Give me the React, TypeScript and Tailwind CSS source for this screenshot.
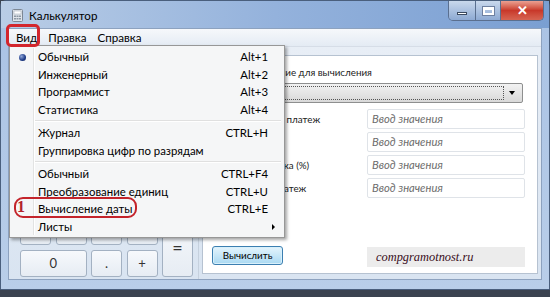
import React from "react";

const F = { fontFamily: 'Lato, "Noto Sans", sans-serif' };

function MenuItem({ label, shortcut, bullet, arrow }: { label: string; shortcut?: string; bullet?: boolean; arrow?: boolean }) {
  return (
    <div className="relative flex h-[17.5px] items-center pl-[28px] pr-[16px] text-[11.4px] text-black">
      {bullet && (
        <span className="absolute left-[9px] top-[6px] h-[7px] w-[7px] rounded-full bg-[radial-gradient(circle_at_35%_35%,#8fa6d8,#1d3a86_60%,#0e1f55)]" />
      )}
      <span className="flex-1 whitespace-nowrap">{label}</span>
      {shortcut && <span className="whitespace-nowrap">{shortcut}</span>}
      {arrow && (
        <span className="absolute right-[9px] top-[6px] h-0 w-0 border-y-[3px] border-l-[3px] border-y-transparent border-l-black" />
      )}
    </div>
  );
}

function Sep() {
  return (
    <div className="flex h-[6px] items-center pl-[24px] pr-[3px]">
      <div className="h-[2px] w-full border-t border-[#e0e0e0] border-b-white border-b" />
    </div>
  );
}

function Key({ children, className = "" }: { children?: React.ReactNode; className?: string }) {
  return (
    <div
      className={`flex items-center justify-center rounded-[3px] border border-[#a3b1c2] bg-gradient-to-b from-[#f7f9fc] to-[#e6ecf3] text-[13px] text-[#333] ${className}`}
    >
      {children}
    </div>
  );
}

function InputRow({ label }: { label: string }) {
  return (
    <div className="flex h-[20px] items-center">
      <span className="-ml-[5px] flex-1 whitespace-nowrap text-[9.8px] text-[#222]">{label}</span>
      <div className="flex h-[20px] w-[158px] items-center rounded-[2px] border border-[#dfe3e8] bg-white pl-[4px] text-[11.2px] italic text-[#6d6d6d]">
        Ввод значения
      </div>
    </div>
  );
}

export default function App() {
  return (
    <div className="relative h-[297px] w-[550px] overflow-hidden bg-[#3b4350]" style={F}>
      <div className="flex h-[290px] flex-col rounded-t-[6px] border border-[#4a5f7d] bg-gradient-to-b from-[#a9c2e4] to-[#b9cee9]">
        {/* title bar */}
        <div className="flex h-[27px] shrink-0 bg-gradient-to-r from-[#b9cde6] via-[#94b2dc] to-[#7a9fd2]">
          <div className="flex items-center pl-[11px] pt-[2px]">
            <svg width="11" height="13" viewBox="0 0 11 13">
              <rect x="0.5" y="0.5" width="10" height="12" rx="1" fill="#dfe4ea" stroke="#7c8794" />
              <rect x="2" y="2" width="7" height="3" fill="#ffffff" stroke="#9aa5b1" strokeWidth="0.5" />
              <rect x="2" y="6.5" width="2" height="1.5" fill="#8c97a3" />
              <rect x="4.5" y="6.5" width="2" height="1.5" fill="#8c97a3" />
              <rect x="7" y="6.5" width="2" height="1.5" fill="#8c97a3" />
              <rect x="2" y="9" width="2" height="1.5" fill="#8c97a3" />
              <rect x="4.5" y="9" width="2" height="1.5" fill="#8c97a3" />
              <rect x="7" y="9" width="2" height="1.5" fill="#8c97a3" />
            </svg>
            <span className="ml-[6px] text-[11.6px] text-black">Калькулятор</span>
          </div>
          <div className="ml-auto mr-[5px] flex h-[20px] self-start overflow-hidden rounded-b-[5px] border border-t-0 border-[#5a6f8f]">
            <div className="flex w-[26px] items-end justify-center bg-gradient-to-b from-[#c9d8ec] to-[#8eaad3] pb-[5px]">
              <div className="h-[3px] w-[10px] border border-[#3b4a60] bg-white" />
            </div>
            <div className="flex w-[25px] items-center justify-center border-l border-[#5a6f8f] bg-gradient-to-b from-[#c9d8ec] to-[#8eaad3]">
              <div className="h-[8px] w-[11px] border-2 border-t-[3px] border-white outline outline-1 outline-[#6e80a0]" />
            </div>
            <div className="flex w-[43px] items-center justify-center border-l border-[#5a6f8f] bg-gradient-to-b from-[#eaa092] via-[#c8382a] to-[#d66452] text-[13px] font-bold text-white">
              ✕
            </div>
          </div>
        </div>
        {/* client */}
        <div className="mx-[7px] flex flex-1 flex-col border border-[#8da2bf] bg-[#e3ebf5]">
          {/* menu bar */}
          <div className="flex h-[18px] shrink-0 items-center gap-[11px] border-b border-[#d6dde7] bg-gradient-to-b from-[#f6f8fb] to-[#e4ebf4] pl-[7px] text-[11.6px] text-black">
            <span>Вид</span>
            <span>Правка</span>
            <span>Справка</span>
          </div>
          <div className="flex flex-1 bg-gradient-to-b from-[#e8eef6] to-[#d9e4f1]">
            {/* keypad */}
            <div className="flex w-[190px] shrink-0 flex-col justify-end border-r border-[#c6d1de] pb-[2px] pl-[11px]">
              <div className="grid grid-cols-[31px_31px_31px_31px_31px] grid-rows-[27px_27px] gap-x-[4.5px] gap-y-[5px]">
                <Key>1</Key>
                <Key>2</Key>
                <Key>3</Key>
                <Key>-</Key>
                <Key className="row-span-2 text-[18px]">=</Key>
                <Key className="col-span-2">0</Key>
                <Key>.</Key>
                <Key>+</Key>
              </div>
            </div>
            {/* right panel */}
            <div className="mb-[5px] ml-[3px] mr-[3px] mt-[8px] flex flex-1 flex-col border border-[#b6c2d1] bg-white pb-[6px] pl-[9px] pr-[12px] pt-[9px]">
              <div className="-ml-[5px] h-[15px] whitespace-nowrap text-[9.8px] leading-[15px] text-[#222]">Выберите значение для вычисления</div>
              <div className="mr-[2px] mt-[3px] flex h-[20px] items-center rounded-[2px] border border-[#8e8f8f] bg-gradient-to-b from-[#f2f2f2] to-[#d9d9d9] p-[2px]">
                <div className="h-full flex-1 border border-dotted border-[#555]" />
                <div className="flex w-[16px] items-center justify-center">
                  <span className="h-0 w-0 border-x-[3.5px] border-t-[4px] border-x-transparent border-t-black" />
                </div>
              </div>
              <div className="mt-[6px] flex flex-col gap-[3px]">
                <InputRow label="Первоначальный платеж" />
                <InputRow label="Срок (лет)" />
                <InputRow label="Процентная ставка (%)" />
                <InputRow label="Ежемесячный платеж" />
              </div>
              <div className="mt-auto flex items-end">
                <div className="mb-[2px] flex h-[19px] w-[71px] items-center justify-center rounded-[3px] border border-[#3c7fb1] bg-gradient-to-b from-[#e5f4fc] to-[#a9d9f2] text-[9.8px] text-black shadow-[inset_0_0_0_1px_#d8f0fb]">
                  Вычислить
                </div>
                <div className="ml-auto flex h-[20px] w-[158px] items-center bg-[#ececec] pl-[9px] text-[12.4px] italic text-[#3a0f22]" style={{ fontFamily: '"Liberation Serif", serif' }}>
                  compgramotnost.ru
                </div>
              </div>
            </div>
          </div>
        </div>
        <div className="h-[9px] shrink-0" />
      </div>

      {/* dropdown menu */}
      <div className="absolute left-[9px] top-[45px] w-[276px] border border-[#979797] bg-[#f5f6f7] py-[2px] shadow-[2px_2px_3px_rgba(0,0,0,0.35)]">
        <div className="absolute bottom-[2px] left-[23px] top-[2px] w-[2px] border-l border-[#e2e3e3] border-r border-r-white" />
        <MenuItem label="Обычный" shortcut="Alt+1" bullet />
        <MenuItem label="Инженерный" shortcut="Alt+2" />
        <MenuItem label="Программист" shortcut="Alt+3" />
        <MenuItem label="Статистика" shortcut="Alt+4" />
        <Sep />
        <MenuItem label="Журнал" shortcut="CTRL+H" />
        <MenuItem label="Группировка цифр по разрядам" />
        <Sep />
        <MenuItem label="Обычный" shortcut="CTRL+F4" />
        <MenuItem label="Преобразование единиц" shortcut="CTRL+U" />
        <MenuItem label="Вычисление даты" shortcut="CTRL+E" />
        <MenuItem label="Листы" arrow />
      </div>

      {/* red annotations */}
      <div className="absolute left-[6px] top-[24px] h-[23px] w-[34px] rounded-[5px] border-[3px] border-[#d3262d]" />
      <div className="absolute left-[14px] top-[197px] h-[21px] w-[123px] rounded-[9px] border-2 border-[#c4242b]" />
      <div className="absolute left-[17px] top-[198px] text-[16px] font-bold leading-[18px] text-[#b3232a]" style={{ fontFamily: '"Liberation Serif", serif' }}>
        1
      </div>
    </div>
  );
}
